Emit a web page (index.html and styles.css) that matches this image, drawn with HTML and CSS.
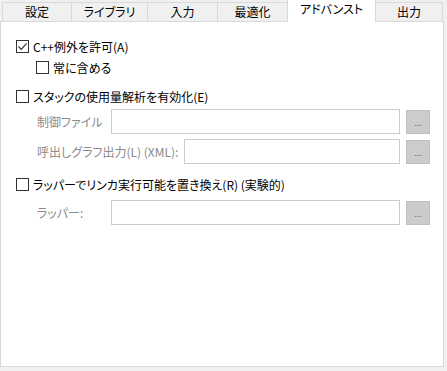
FILE: index.html
```html
<!DOCTYPE html>
<html lang="ja">
<head>
    <meta charset="UTF-8">
    <meta name="viewport" content="width=device-width, initial-scale=1.0">
    <title>アドバンスト</title>
    <link rel="stylesheet" href="styles.css">
</head>
<body>

<div class="tabs">
    <div class="tab tab-settings">設定</div>
    <div class="tab tab-library">ライブラリ</div>
    <div class="tab tab-input">入力</div>
    <div class="tab tab-optimize">最適化</div>
    <div class="tab tab-advanced active">アドバンスト</div>
    <div class="tab tab-output">出力</div>
</div>

<div class="panel">
    <label class="check-row row-cpp">
        <span class="box checked">
            <svg width="11" height="11" viewBox="0 0 11 11"><path d="M1.5 5.5 L4.2 8.3 L9.6 2.4" fill="none" stroke="#333" stroke-width="1.2"/></svg>
        </span>
        <span>C++例外を許可(A)</span>
    </label>
    <label class="check-row sub row-always">
        <span class="box"></span>
        <span>常に含める</span>
    </label>

    <label class="check-row row-stack">
        <span class="box"></span>
        <span>スタックの使用量解析を有効化(E)</span>
    </label>
    <div class="field-row row-control">
        <span class="field-label">制御ファイル</span>
        <div class="field-input"></div>
        <div class="browse">...</div>
    </div>
    <div class="field-row row-graph">
        <span class="field-label wide">呼出しグラフ出力(L) (XML):</span>
        <div class="field-input"></div>
        <div class="browse">...</div>
    </div>

    <label class="check-row row-wrapper">
        <span class="box"></span>
        <span>ラッパーでリンカ実行可能を置き換え(R) (実験的)</span>
    </label>
    <div class="field-row row-wrap-field">
        <span class="field-label">ラッパー:</span>
        <div class="field-input"></div>
        <div class="browse">...</div>
    </div>
</div>

</body>
</html>
```
FILE: styles.css
```css
body {
    margin: 0;
    padding: 0;
    width: 447px;
    height: 371px;
    background-color: #f0f0f0;
    font-family: "Noto Sans CJK JP", "Noto Sans", sans-serif;
    font-size: 12px;
    font-feature-settings: "palt";
    color: #000;
    overflow: hidden;
}

/* tab strip */
.tabs {
    display: flex;
    height: 21px;
    padding-left: 2px;
    align-items: flex-end;
}
.tab {
    box-sizing: border-box;
    height: 19px;
    line-height: 17px;
    text-align: center;
    background-color: #f0f0f0;
    border-top: 1px solid #d9d9d9;
    border-left: 1px solid #d9d9d9;
    white-space: nowrap;
    flex-shrink: 0;
}
.tab-settings { width: 69px; }
.tab-library { width: 76px; }
.tab-input { width: 70px; }
.tab-optimize { width: 70px; }
.tab-advanced { width: 89px; }
.tab-output {
    width: 67px;
    border-left: none;
    border-right: 1px solid #d9d9d9;
}
.tab.active {
    position: relative;
    z-index: 1;
    height: 22px;
    margin-bottom: -1px;
    line-height: 18px;
    background-color: #fff;
    border-right: 1px solid #d9d9d9;
    border-top: none;
}

/* main panel */
.panel {
    box-sizing: border-box;
    width: 444px;
    height: 346px;
    background-color: #fff;
    border: 1px solid #d9d9d9;
    padding: 18px 13px 0 15px;
}

.check-row {
    display: flex;
    align-items: center;
    height: 13px;
    line-height: 16px;
    white-space: nowrap;
}
.check-row.sub {
    padding-left: 20px;
}
.box {
    box-sizing: border-box;
    width: 13px;
    height: 13px;
    border: 1px solid #333;
    background-color: #fff;
    margin-right: 4px;
    display: flex;
    align-items: center;
    justify-content: center;
    flex-shrink: 0;
}
.box svg {
    display: block;
}

.row-always { margin-top: 8px; }
.row-stack { margin-top: 16px; }
.row-control { margin-top: 6px; }
.row-graph { margin-top: 5px; }
.row-wrapper { margin-top: 14px; }
.row-wrap-field { margin-top: 9px; }

.field-row {
    display: flex;
    align-items: center;
    height: 25px;
    padding-left: 21px;
}
.field-label {
    width: 74px;
    flex-shrink: 0;
    color: #8a8a8a;
    white-space: nowrap;
}
.field-label.wide {
    width: 147px;
}
.field-input {
    box-sizing: border-box;
    flex: 1;
    min-width: 0;
    height: 25px;
    border: 1px solid #cccccc;
    background-color: #fff;
}
.browse {
    box-sizing: border-box;
    flex-shrink: 0;
    width: 24px;
    height: 24px;
    margin-left: 6px;
    background-color: #cccccc;
    border: 1px solid #bfbfbf;
    color: #707070;
    font-size: 9px;
    line-height: 24px;
    text-align: center;
}
```
